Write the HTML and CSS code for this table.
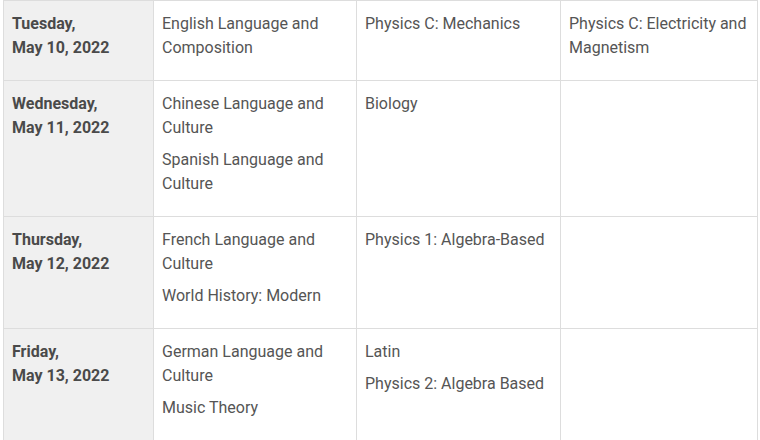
FILE: index.html
```html
<!DOCTYPE html>
<html>
<head>
<meta charset="utf-8">
<link rel="stylesheet" href="styles.css">
</head>
<body>
<table class="schedule">
  <colgroup>
    <col class="c-date">
    <col class="c-a">
    <col class="c-b">
    <col class="c-c">
  </colgroup>
  <tbody>
    <tr>
      <th class="date">Tuesday,<br>May 10, 2022</th>
      <td><p>English Language and Composition</p></td>
      <td><p>Physics C: Mechanics</p></td>
      <td><p>Physics C: Electricity and Magnetism</p></td>
    </tr>
    <tr>
      <th class="date">Wednesday,<br>May 11, 2022</th>
      <td><p>Chinese Language and Culture</p><p>Spanish Language and Culture</p></td>
      <td><p>Biology</p></td>
      <td></td>
    </tr>
    <tr>
      <th class="date">Thursday,<br>May 12, 2022</th>
      <td><p>French Language and Culture</p><p>World History: Modern</p></td>
      <td><p>Physics 1: Algebra-Based</p></td>
      <td></td>
    </tr>
    <tr>
      <th class="date">Friday,<br>May 13, 2022</th>
      <td><p>German Language and Culture</p><p>Music Theory</p></td>
      <td><p>Latin</p><p>Physics 2: Algebra Based</p></td>
      <td></td>
    </tr>
  </tbody>
</table>
</body>
</html>
```
FILE: styles.css
```css
html, body {
  margin: 0;
  padding: 0;
  background: #ffffff;
}
body {
  font-family: Roboto, "Liberation Sans", sans-serif;
  font-size: 16px;
  line-height: 24px;
  color: #555555;
}
.schedule {
  margin-left: 3px;
  border-collapse: collapse;
  table-layout: fixed;
  width: 754px;
}
.c-date { width: 150px; }
.c-a { width: 203px; }
.c-b { width: 204px; }
.c-c { width: 197px; }
.schedule th,
.schedule td {
  border: 1px solid #dddddd;
  padding: 11px 8px 12px 8px;
  vertical-align: top;
  text-align: left;
}
.schedule th.date {
  background: #f0f0f0;
  font-weight: 700;
  color: #4a4a4a;
  padding-bottom: 20px;
}
.schedule p {
  margin: 0 0 8px 0;
}
```
